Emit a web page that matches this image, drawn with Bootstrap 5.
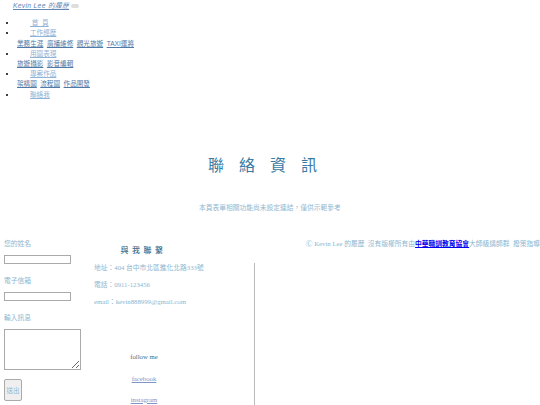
<!DOCTYPE html>
<html lang="zh-Hant">
<head>
<meta charset="utf-8">
<title>聯絡資訊</title>
<link rel="stylesheet" href="https://cdn.jsdelivr.net/npm/bootstrap@5.3.0/dist/css/bootstrap.min.css">
<style>
html,body{height:405px;overflow:hidden}
body{font-family:"Liberation Serif","Noto Sans CJK TC",serif;font-size:6.75px;line-height:10.2px;color:#8db6cf;background:#fff}
a{color:#4f7aa8}
.brand-link{display:inline-block;margin:1px 0 0 13px;font-style:italic;letter-spacing:.3px;font-family:"Liberation Sans","Noto Sans CJK TC",sans-serif;font-size:6.75px;color:#5f86b5}
.tog-mini{display:inline-block;width:8px;height:4px;margin-left:2px;background:#ddd;border:0;border-radius:2px;padding:0;vertical-align:baseline}
.menu-list{list-style:disc;margin:7px 0 0;padding:0 0 0 17px;color:#000;font-family:"Liberation Sans","Noto Sans CJK TC",sans-serif;font-size:6.6px;line-height:10.2px}
.menu-main{margin-left:13px;color:#8fb3d6}
.sub-links{display:flex;gap:3.5px;margin:0}
.headline{margin:54px 0 0;text-align:center;font-size:16px;line-height:20px;letter-spacing:15px;font-weight:400;color:#3b7ba3;font-family:"Noto Sans CJK TC",sans-serif}
.subline{margin:28px 0 0;text-align:center;font-size:6.75px;line-height:10px;color:#8fb8d2;font-family:"Noto Sans CJK TC",sans-serif}
.main-row{margin-top:25px}
.form-pane{width:90px;padding:1px 0 0 4px;font-family:"Noto Sans CJK TC",sans-serif}
.form-pane label{display:block;margin:0 0 6px;line-height:11px}
.form-pane input{display:block;width:67px;height:9px;border:1px solid #aaa;padding:0;margin-bottom:11px}
.form-pane textarea{display:block;width:77px;height:41px;border:1px solid #aaa;padding:0;margin-bottom:9px}
.send-btn{display:block;width:18px;height:22px;padding:0;font-size:6.5px;color:#8db6cf;background:#efefef;border:1px solid #aaa;border-radius:2px}
.info-pane{width:165px;margin-top:7px}
.info-head{margin:0 0 14px;text-align:center;padding-right:58px;font-size:8px;letter-spacing:3.5px;color:#3d6f8f;font-family:"Noto Sans CJK TC",sans-serif;font-weight:500;line-height:11px}
.info-body{border-right:1px solid #bbb;height:150px;padding-left:4px}
.info-body p{margin:0 0 7px;line-height:10px}
.info-body p:first-child{margin-top:-6px}
.follow-box{margin-top:51px;padding-right:60px;text-align:center}
.follow-box p{margin:0 0 11px}
.follow-box a{color:#7f94c8}
.follow-box .follow-title{color:#3d6f8f;margin-bottom:12px}
.credit-pane{margin-top:2px;white-space:nowrap}
.credit-link{font-weight:700;color:#00e}
</style>
</head>
<body>
<nav>
  <a class="brand-link" href="#">Kevin Lee 的履歷</a><button class="tog-mini" type="button" aria-label="menu"></button>
  <ul class="menu-list">
    <li><a class="menu-main" href="#">&nbsp;首&nbsp;&nbsp;頁</a></li>
    <li><a class="menu-main" href="#">工作經歷</a>
      <div class="sub-links"><a href="#">業務生涯</a><a href="#">廣播維修</a><a href="#">觀光旅遊</a><a href="#">TAXI運將</a></div></li>
    <li><a class="menu-main" href="#">用圖表現</a>
      <div class="sub-links"><a href="#">旅遊攝影</a><a href="#">影音編輯</a></div></li>
    <li><a class="menu-main" href="#">專案作品</a>
      <div class="sub-links"><a href="#">架構圖</a><a href="#">流程圖</a><a href="#">作品開發</a></div></li>
    <li><a class="menu-main" href="#">聯絡我</a></li>
  </ul>
</nav>
<h1 class="headline">聯絡資訊</h1>
<p class="subline">本頁表單相關功能尚未設定連結，僅供示範參考</p>
<div class="main-row d-flex">
  <form class="form-pane">
    <label for="n1">您的姓名</label><input id="n1" type="text">
    <label for="n2">電子信箱</label><input id="n2" type="text">
    <label for="n3">輸入訊息</label><textarea id="n3"></textarea>
    <button class="send-btn" type="button">送出</button>
  </form>
  <div class="info-pane">
    <h2 class="info-head">與我聯繫</h2>
    <div class="info-body">
      <p>地址：404 台中市北區進化北路333號</p>
      <p>電話：0911-123456</p>
      <p>email：kevin888999@gmail.com</p>
      <div class="follow-box">
        <p class="follow-title">follow me</p>
        <p><a href="#">facebook</a></p>
        <p><a href="#">instagram</a></p>
      </div>
    </div>
  </div>
  <div class="credit-pane flex-grow-1 text-end">Ⓒ Kevin Lee 的履歷&nbsp;&nbsp;沒有版權所有由<a class="credit-link" href="#">中華職訓教育協會</a>大師級講師群&nbsp;&nbsp;撥策指導</div>
</div>
<script src="https://cdn.jsdelivr.net/npm/bootstrap@5.3.0/dist/js/bootstrap.bundle.min.js"></script>
</body>
</html>
